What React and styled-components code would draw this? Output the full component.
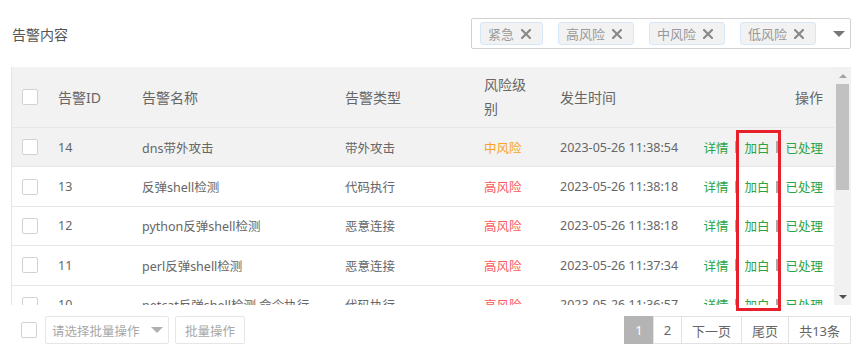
import React from "react";
import styled, { createGlobalStyle } from "styled-components";

const Global = createGlobalStyle`
  html, body { margin: 0; padding: 0; background: #fff; }
  body { font-family: "Noto Sans", "Noto Sans CJK SC", sans-serif; color: #666; }
  * { box-sizing: border-box; }
`;

const Page = styled.div`
  position: relative;
  width: 865px;
  height: 359px;
  padding: 18px 14px 0 11px;
  overflow: hidden;
`;

const TopBar = styled.div`
  display: flex;
  align-items: center;
  justify-content: space-between;
  height: 31px;
`;

const Label = styled.div`
  padding-left: 1px;
  font-size: 14px;
  color: #555;
`;

const MultiSelect = styled.div`
  width: 380px;
  height: 31px;
  border: 1px solid #d2d2d2;
  border-radius: 2px;
  display: flex;
  align-items: center;
  padding: 0 5px 0 8px;
`;

const Tags = styled.div`
  display: flex;
  gap: 15px;
`;

const Tag = styled.div`
  height: 23px;
  display: flex;
  align-items: center;
  gap: 7px;
  padding: 0 11px 0 7px;
  background: #f2f2f2;
  border: 1px solid #d6e7f8;
  border-radius: 3px;
  font-size: 13px;
  color: #999;
`;

const Caret = styled.span`
  width: 0;
  height: 0;
  border-left: ${(p) => p.$size}px solid transparent;
  border-right: ${(p) => p.$size}px solid transparent;
  border-top: ${(p) => p.$size}px solid ${(p) => p.$color || "#777"};
  ${(p) => (p.$auto ? "margin-left: auto;" : "")}
`;

const CloseIcon = () => (
  <svg width="10" height="10" viewBox="0 0 10 10">
    <path d="M1 1L9 9M9 1L1 9" stroke="#8a8a8a" strokeWidth="2.2" strokeLinecap="square" />
  </svg>
);

const TableWrap = styled.div`
  margin-top: 18px;
  height: 238px;
  display: flex;
  border-left: 1px solid #e6e6e6;
`;

const TableClip = styled.div`
  flex: 1;
  overflow: hidden;
`;

const cols = "36px 84px 203px 139px 76px 140px 143px";

const HeadRow = styled.div`
  display: grid;
  grid-template-columns: ${cols};
  height: 61px;
  align-items: center;
  background: #f2f2f2;
  border-bottom: 1px solid #e6e6e6;
  font-size: 14px;
  color: #666;
`;

const BodyRow = styled.div`
  display: grid;
  grid-template-columns: ${cols};
  height: 39.4px;
  align-items: center;
  background: ${(p) => (p.$hover ? "#f2f2f2" : "#fff")};
  border-bottom: 1px solid #e6e6e6;
  font-size: 12.5px;
  color: #666;
`;

const Cell = styled.div`
  padding: 0 10px;
  white-space: nowrap;
  display: flex;
  align-items: center;
  justify-content: ${(p) => (p.$right ? "flex-end" : "flex-start")};
`;

const Wrap = styled.span`
  white-space: normal;
  max-width: 44px;
  line-height: 24px;
`;

const Checkbox = styled.span`
  display: inline-block;
  width: 16px;
  height: 16px;
  border: 1px solid #d2d2d2;
  border-radius: 2px;
  background: #fff;
`;

const Risk = styled.span`
  color: ${(p) => (p.$level === "中风险" ? "#f7a325" : "#fb5a5a")};
`;

const Link = styled.span`
  color: #2aa446;
`;

const Sep = styled.span`
  width: 2px;
  height: 12px;
  margin: 0 7px;
  background: #a8a8a8;
`;

const ScrollBar = styled.div`
  width: 17px;
  background: #f1f1f1;
  display: flex;
  flex-direction: column;
  align-items: center;
`;

const ScrollBtn = styled.div`
  height: 17px;
  width: 100%;
  display: flex;
  align-items: center;
  justify-content: center;
`;

const Thumb = styled.div`
  width: 13px;
  height: 106px;
  background: #c1c1c1;
`;

const Spacer = styled.div`
  flex: 1;
`;

const UpArrow = styled.span`
  width: 0;
  height: 0;
  border-left: 4px solid transparent;
  border-right: 4px solid transparent;
  border-bottom: 4px solid #a3a3a3;
`;

const DownArrow = styled.span`
  width: 0;
  height: 0;
  border-left: 4px solid transparent;
  border-right: 4px solid transparent;
  border-top: 4px solid #505050;
`;

const Footer = styled.div`
  margin-top: 11px;
  height: 28px;
  display: flex;
  align-items: center;
  padding-left: 10px;
  font-size: 12.5px;
`;

const BatchSelect = styled.div`
  margin-left: 8px;
  width: 124px;
  height: 28px;
  border: 1px solid #e6e6e6;
  border-radius: 2px;
  display: flex;
  align-items: center;
  padding: 0 5px 0 6px;
  color: #a8a8a8;
`;

const BatchButton = styled.div`
  margin-left: 6px;
  height: 28px;
  padding: 0 9px;
  border: 1px solid #e6e6e6;
  border-radius: 2px;
  display: flex;
  align-items: center;
  color: #a8a8a8;
`;

const Pager = styled.div`
  margin-left: auto;
  display: flex;
  height: 28px;
`;

const PageItem = styled.div`
  height: 28px;
  padding: 0 10px;
  display: flex;
  align-items: center;
  font-size: 13px;
  border: 1px solid ${(p) => (p.$active ? "#b4b4b4" : "#e2e2e2")};
  margin-left: -1px;
  background: ${(p) => (p.$active ? "#b4b4b4" : "#fff")};
  color: ${(p) => (p.$active ? "#fff" : "#666")};
`;

const Highlight = styled.div`
  position: absolute;
  left: 736px;
  top: 130px;
  width: 45px;
  height: 181px;
  border: 3px solid #e8202b;
  pointer-events: none;
`;

const rows = [
  ["14", "dns带外攻击", "带外攻击", "中风险", "2023-05-26 11:38:54"],
  ["13", "反弹shell检测", "代码执行", "高风险", "2023-05-26 11:38:18"],
  ["12", "python反弹shell检测", "恶意连接", "高风险", "2023-05-26 11:38:18"],
  ["11", "perl反弹shell检测", "恶意连接", "高风险", "2023-05-26 11:37:34"],
  ["10", "netcat反弹shell检测 命令执行", "代码执行", "高风险", "2023-05-26 11:36:57"],
];

export default function App() {
  return (
    <>
      <Global />
      <Page>
        <TopBar>
          <Label>告警内容</Label>
          <MultiSelect>
            <Tags>
              {["紧急", "高风险", "中风险", "低风险"].map((t) => (
                <Tag key={t}>
                  {t}
                  <CloseIcon />
                </Tag>
              ))}
            </Tags>
            <Caret $size={6} $auto />
          </MultiSelect>
        </TopBar>

        <TableWrap>
          <TableClip>
            <HeadRow>
              <Cell><Checkbox /></Cell>
              <Cell>告警ID</Cell>
              <Cell>告警名称</Cell>
              <Cell>告警类型</Cell>
              <Cell><Wrap>风险级别</Wrap></Cell>
              <Cell>发生时间</Cell>
              <Cell $right>操作</Cell>
            </HeadRow>
            {rows.map((r, i) => (
              <BodyRow key={r[0]} $hover={i === 0}>
                <Cell><Checkbox /></Cell>
                <Cell>{r[0]}</Cell>
                <Cell>{r[1]}</Cell>
                <Cell>{r[2]}</Cell>
                <Cell><Risk $level={r[3]}>{r[3]}</Risk></Cell>
                <Cell>{r[4]}</Cell>
                <Cell $right>
                  <Link>详情</Link>
                  <Sep />
                  <Link>加白</Link>
                  <Sep />
                  <Link>已处理</Link>
                </Cell>
              </BodyRow>
            ))}
          </TableClip>
          <ScrollBar>
            <ScrollBtn><UpArrow /></ScrollBtn>
            <Thumb />
            <Spacer />
            <ScrollBtn><DownArrow /></ScrollBtn>
          </ScrollBar>
        </TableWrap>

        <Footer>
          <Checkbox />
          <BatchSelect>
            请选择批量操作
            <Caret $size={6} $color="#b0b0b0" $auto />
          </BatchSelect>
          <BatchButton>批量操作</BatchButton>
          <Pager>
            <PageItem $active>1</PageItem>
            <PageItem>2</PageItem>
            <PageItem>下一页</PageItem>
            <PageItem>尾页</PageItem>
            <PageItem>共13条</PageItem>
          </Pager>
        </Footer>

        <Highlight />
      </Page>
    </>
  );
}
